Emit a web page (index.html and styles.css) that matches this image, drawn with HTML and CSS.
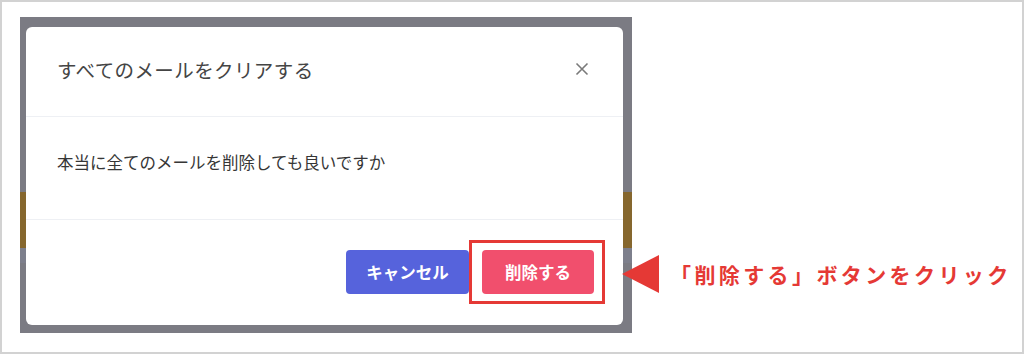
FILE: index.html
```html
<!DOCTYPE html>
<html lang="ja">
<head>
<meta charset="utf-8">
<link rel="stylesheet" href="styles.css">
</head>
<body>
<div class="frame">
  <div class="backdrop">
    <div class="modal">
      <div class="modal-head">
        <div class="modal-title">すべてのメールをクリアする</div>
        <svg class="close" width="14" height="14" viewBox="0 0 14 14"><path d="M1.5 1.5 L12.5 12.5 M12.5 1.5 L1.5 12.5" stroke="#7a7a7a" stroke-width="1.6" fill="none"/></svg>
      </div>
      <div class="modal-body">本当に全てのメールを削除しても良いですか</div>
      <div class="modal-foot">
        <button class="btn btn-cancel">キャンセル</button>
        <button class="btn btn-delete">削除する</button>
      </div>
    </div>
  </div>
  <div class="note">
    <svg class="arrow" width="37" height="38" viewBox="0 0 37 38"><polygon points="0,19 37,0 37,38" fill="#e53935"/></svg>
    <span class="note-text">「削除する」ボタンをクリック</span>
  </div>
</div>
</body>
</html>
```
FILE: styles.css
```css
html, body {
  margin: 0;
  padding: 0;
  background: #fff;
}
body {
  font-family: "Noto Sans CJK JP", "Noto Sans", sans-serif;
}
.frame {
  box-sizing: border-box;
  width: 1024px;
  height: 354px;
  border: 2px solid #d2d2d2;
  padding: 15px 0 0 18px;
  display: flex;
  align-items: flex-start;
}
.backdrop {
  box-sizing: border-box;
  width: 612px;
  height: 316px;
  padding: 10px 9px 8px 6px;
  background: linear-gradient(to bottom, #7b7b83 0, #7b7b83 175px, #86672e 175px, #86672e 231px, #7d7f8c 231px, #7d7f8c 246px, #7b7b83 246px);
  flex-shrink: 0;
}
.modal {
  background: #fff;
  border-radius: 6px;
  height: 298px;
  display: flex;
  flex-direction: column;
}
.modal-head {
  height: 90px;
  box-sizing: border-box;
  padding: 0 34px 4px 31px;
  display: flex;
  align-items: center;
  justify-content: space-between;
  border-bottom: 1px solid #eef0f4;
}
.modal-title {
  font-size: 19.5px;
  color: #444;
  letter-spacing: 0.4px;
}
.close {
  display: block;
  margin-top: -2px;
}
.modal-body {
  box-sizing: border-box;
  height: 103px;
  padding: 33px 31px 0;
  font-size: 16.5px;
  line-height: 24px;
  color: #363636;
  border-bottom: 1px solid #eef0f4;
}
.modal-foot {
  flex: 1;
  display: flex;
  justify-content: flex-end;
  align-items: flex-start;
  gap: 13px;
  padding: 30px 29px 0 0;
}
.btn {
  height: 44px;
  border: none;
  border-radius: 4px;
  color: #fff;
  font-family: "Noto Sans CJK JP", sans-serif;
  font-weight: 700;
  font-size: 16.5px;
  padding: 0 20px;
}
.btn-cancel {
  background: #5663dc;
  width: 123px;
}
.btn-delete {
  background: #f14f6d;
  width: 112px;
  position: relative;
}
.btn-delete::after {
  content: "";
  position: absolute;
  left: -13px;
  right: -11px;
  top: -10px;
  bottom: -10px;
  border: 3px solid #e53935;
}
.note {
  margin-top: 238px;
  margin-left: -10px;
  display: flex;
  align-items: center;
  gap: 11px;
}
.arrow {
  display: block;
  flex-shrink: 0;
}
.note-text {
  color: #e53935;
  font-weight: 700;
  font-size: 21px;
  letter-spacing: 3.4px;
  white-space: nowrap;
}
```
